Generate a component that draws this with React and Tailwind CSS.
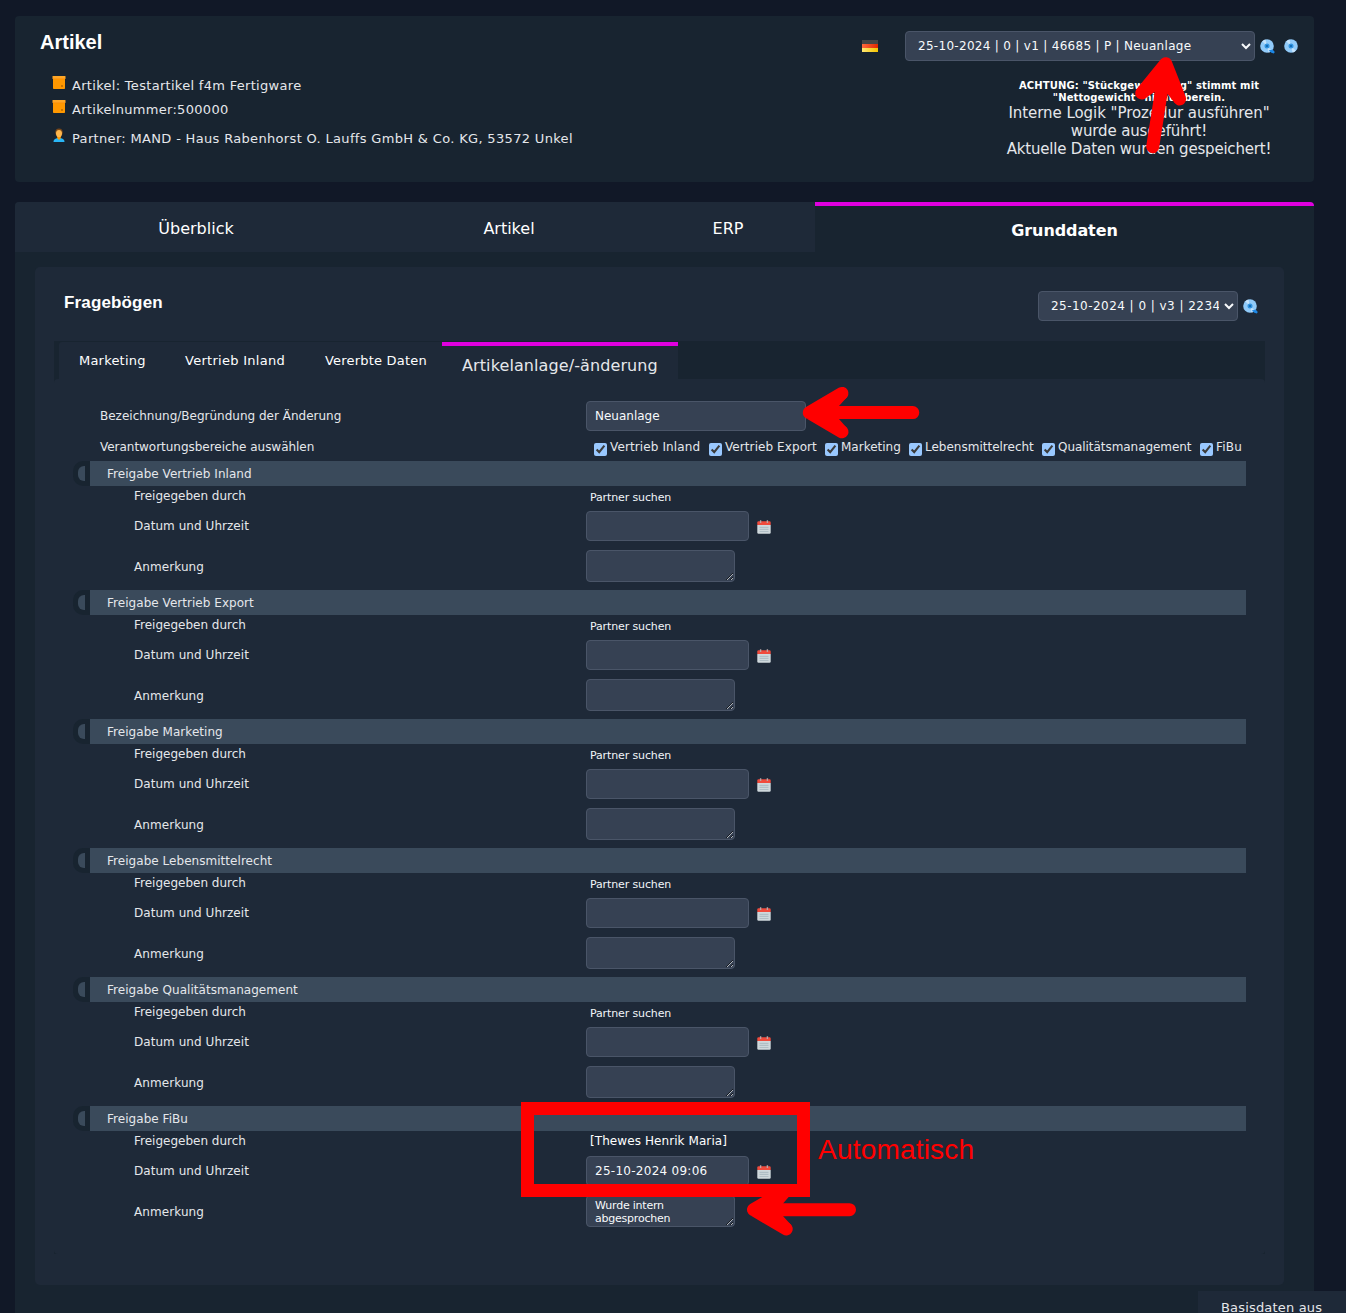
const sections = [
  { title: 'Freigabe Vertrieb Inland' },
  { title: 'Freigabe Vertrieb Export' },
  { title: 'Freigabe Marketing' },
  { title: 'Freigabe Lebensmittelrecht' },
  { title: 'Freigabe Qualitätsmanagement' },
  {
    title: 'Freigabe FiBu',
    partner: '[Thewes Henrik Maria]',
    date: '25-10-2024 09:06',
    note: 'Wurde intern\nabgesprochen',
  },
];

const areas = [
  { label: 'Vertrieb Inland', width: 'w-[115px] tracking-[0.12px]' },
  { label: 'Vertrieb Export', width: 'w-[116px] tracking-[0.08px]' },
  { label: 'Marketing', width: 'w-[84px]' },
  { label: 'Lebensmittelrecht', width: 'w-[133px]' },
  { label: 'Qualitätsmanagement', width: 'w-[158px] tracking-[-0.05px]' },
  { label: 'FiBu', width: 'w-[40px] tracking-[0.2px]' },
];

function BoxIcon() {
  return (
    <svg className="w-[14px] h-[13px] shrink-0" viewBox="0 0 14 13">
      <rect x="1" y="1" width="12" height="12" rx="0.8" fill="#ff9800" />
      <rect x="0.5" y="0" width="13" height="3" rx="0.6" fill="#ffa726" />
      <rect x="1" y="2.7" width="12" height="0.4" fill="#f57c00" />
      <rect x="9" y="9" width="2" height="2" fill="#c87400" />
    </svg>
  );
}

function PersonIcon() {
  return (
    <svg className="w-[14px] h-[14px] shrink-0" viewBox="0 0 14 14">
      <path d="M1.5 14 C1.5 11 4 10 7 10 C10 10 12.5 11 12.5 14 Z" fill="#29b6f6" />
      <path d="M5.2 8 H8.8 V10.2 L7 12 L5.2 10.2 Z" fill="#ff9800" />
      <ellipse cx="7" cy="4.3" rx="3.7" ry="3.8" fill="#784719" />
      <ellipse cx="7" cy="5.6" rx="3" ry="3.6" fill="#ffb74d" />
    </svg>
  );
}

function FlagIcon() {
  return (
    <svg className="w-[16px] h-[12px]" viewBox="0 0 16 12">
      <defs>
        <linearGradient id="flagRed" x1="0" y1="0" x2="1" y2="0">
          <stop offset="0" stopColor="#ff6a3c" />
          <stop offset="1" stopColor="#e02800" />
        </linearGradient>
        <linearGradient id="flagGold" x1="0" y1="0" x2="1" y2="0">
          <stop offset="0" stopColor="#ffe873" />
          <stop offset="1" stopColor="#f5c400" />
        </linearGradient>
      </defs>
      <rect width="16" height="4" fill="#454545" />
      <rect y="4" width="16" height="4" fill="url(#flagRed)" />
      <rect y="8" width="16" height="4" fill="url(#flagGold)" />
    </svg>
  );
}

function DiscIcon({ search }) {
  return (
    <svg className="w-[15px] h-[15px]" viewBox="0 0 15 15">
      <circle cx="7" cy="7" r="6.8" fill="#90caf9" />
      <path d="M7 7 L2.2 2.2 A6.8 6.8 0 0 1 5.5 0.4 Z M7 7 L11.8 11.8 A6.8 6.8 0 0 1 8.5 13.6 Z" fill="#c5e3fc" />
      <circle cx="7" cy="7" r="2.5" fill="#2f93e0" />
      <circle cx="7" cy="7" r="1" fill="#0d5fa8" />
      {search && <path d="M8.6 11.6 L12.6 10.4 L14.8 13 L13.8 14.6 L11.4 13.8 Z" fill="#1e88e5" />}
    </svg>
  );
}

function CalendarIcon() {
  return (
    <svg className="w-[14px] h-[14px]" viewBox="0 0 14 14">
      <path d="M0.3 5 H13.7 V12.5 Q13.7 13.7 12.5 13.7 H1.5 Q0.3 13.7 0.3 12.5 Z" fill="#cfd8dc" />
      <path d="M0.3 5 V2.6 Q0.3 1.3 1.6 1.3 H12.4 Q13.7 1.3 13.7 2.6 V5 Z" fill="#f04a3c" />
      <path d="M3.6 0.3 V3 M10.4 0.3 V3" stroke="#b9a5a5" strokeWidth="1.4" />
      <path d="M2.5 7.3 H11.5 M2.5 9.4 H11.5 M2.5 11.5 H11.5" stroke="#b0bec5" strokeWidth="1.2" />
    </svg>
  );
}

// points to the left, the tip is at 0,0
function Arrow({ x, y, length, angle = 0 }) {
  return (
    <g transform={`translate(${x} ${y}) rotate(${angle})`}>
      <path
        d={`M${length} 0 H0 M32.7 -19.2 L0 0 L32.7 19.2`}
        fill="none"
        stroke="#f00"
        strokeWidth="13"
        strokeLinecap="round"
        strokeLinejoin="round"
      />
      <path d="M0 0 L32 -19 L37.8 -15.6 L29.7 -6.5 V6.5 L37.8 15.6 L32 19 Z" fill="#f00" />
    </g>
  );
}

const field = 'block border border-[#4a5568] bg-[#364153] rounded-[4px] text-[#f8fafc] outline-none';

function Section({ title, partner, date, note }) {
  return (
    <section className="h-[129px]">
      <div className="flex h-[25px]">
        <div className="w-[17px] bg-[#182430] rounded-l-[10px] pl-[5px] py-[5px]">
          <div className="w-[7px] h-[15px] bg-[#3a4a5b] rounded-l-[6px]" />
        </div>
        <h3 className="w-[1156px] bg-[#3a4a5b] pl-[17px] leading-[26px] tracking-[0.04px]">{title}</h3>
      </div>
      <div className="flex h-[22px] pl-[61px]">
        <span className="w-[456px] leading-[21px]">Freigegeben durch</span>
        {partner ? (
          <span className="leading-[21px] tracking-[0.08px] text-white">{partner}</span>
        ) : (
          <span className="text-[11px] leading-[23px] tracking-[-0.13px] text-[#f1f5f9]">Partner suchen</span>
        )}
      </div>
      <div className="flex items-center h-[36px] pl-[61px]">
        <span className="w-[452px] leading-[18px] pb-[1px] tracking-[0.05px]">Datum und Uhrzeit</span>
        <input className={`${field} w-[163px] h-[30px] px-2 tracking-[0.27px]`} defaultValue={date} />
        <span className="ml-2 mt-[2px]"><CalendarIcon /></span>
      </div>
      <div className="flex h-[46px] pl-[61px] pt-[6px]">
        <span className="w-[452px] leading-[34px] tracking-[0.08px]">Anmerkung</span>
        <textarea
          className={`${field} w-[149px] h-[32px] px-2 pt-[3px] text-[11px] leading-[13px] tracking-[-0.22px] overflow-hidden resize`}
          defaultValue={note}
        />
      </div>
    </section>
  );
}

export default function App() {
  return (
    <div className="relative w-[1346px] h-[1313px] overflow-hidden bg-[#111827] pt-[16px] pl-[15px] scheme-dark font-['DejaVu_Sans',sans-serif] text-[12px] text-[#e5e7eb]">
      <header className="flex justify-between w-[1299px] h-[166px] bg-[#182430] rounded-[4px]">
        <div className="pl-[25px]">
          <h1 className="pt-[11px] text-[20px] leading-[30px] font-bold text-white font-['Liberation_Sans',Arial,sans-serif]">Artikel</h1>
          <div className="pl-[12px] pt-[16px] text-[13px] tracking-[0.3px]">
            <div className="flex gap-[6px] h-[24px] leading-[26px]"><span className="pt-[3px]"><BoxIcon /></span>Artikel: Testartikel f4m Fertigware</div>
            <div className="flex gap-[6px] h-[24px] leading-[26px]"><span className="pt-[3px]"><BoxIcon /></span>Artikelnummer:500000</div>
            <div className="flex gap-[6px] h-[24px] leading-[26px] mt-[5px] tracking-[0.33px]"><span className="pt-[2px]"><PersonIcon /></span>Partner: MAND - Haus Rabenhorst O. Lauffs GmbH &amp; Co. KG, 53572 Unkel</div>
          </div>
        </div>
        <div className="w-[452px] pt-[15px]">
          <div className="flex items-center">
            <FlagIcon />
            <select className={`${field} ml-[27px] w-[350px] h-[30px] pl-[8px] tracking-[0.3px]`}>
              <option>25-10-2024 | 0 | v1 | 46685 | P | Neuanlage</option>
            </select>
            <span className="ml-[5px]"><DiscIcon search /></span>
            <span className="ml-[9px]"><DiscIcon /></span>
          </div>
          <div className="ml-[127px] mt-[19px] w-[300px] text-center">
            <p className="text-[10px] leading-[12px] font-bold text-white tracking-[0.12px]">
              ACHTUNG: "Stückgewichtung" stimmt mit<br />"Nettogewicht" nicht überein.
            </p>
            <p className="text-[15px] leading-[18px]">
              <span className="tracking-[-0.05px]">Interne Logik "Prozedur ausführen"<br /></span>
              <span className="tracking-[-0.15px]">wurde ausgeführt!</span><br />
              <span className="tracking-[-0.2px]">Aktuelle Daten wurden gespeichert!</span>
            </p>
          </div>
        </div>
      </header>

      <main className="mt-[20px] w-[1299px] h-[1111px] bg-[#182430] rounded-t-[4px] overflow-hidden">
        <nav className="flex h-[50px] text-[16px] leading-[53px] text-center text-white">
          <div className="w-[362px] bg-[#1e2938]">Überblick</div>
          <div className="w-[264px] bg-[#1e2938]">Artikel</div>
          <div className="w-[174px] bg-[#1e2938]">ERP</div>
          <div className="w-[499px] border-t-4 border-[#df00df] leading-[50px] font-bold tracking-[-0.1px]">Grunddaten</div>
        </nav>

        <div className="ml-[20px] mt-[15px] w-[1249px] h-[1018px] bg-[#1e2938] rounded-[5px] pl-[19px]">
          <div className="flex h-[74px] pl-[10px] pt-[24px]">
            <h2 className="w-[974px] text-[17px] leading-[23px] font-bold text-white tracking-[0.15px] font-['Liberation_Sans',Arial,sans-serif]">Fragebögen</h2>
            <select className={`${field} w-[200px] h-[30px] pl-[8px] pr-[2px] tracking-[0.46px]`}>
              <option>25-10-2024 | 0 | v3 | 22342 | P | Neuanlage</option>
            </select>
            <span className="ml-[5px] pt-[8px]"><DiscIcon search /></span>
          </div>

          <div className="w-[1211px] h-[913px] bg-[#182430]">
            <nav className="flex h-[38px] pl-[5px] pt-[1px] text-[13px] leading-[37px] text-white tracking-[0.2px]">
              <div className="w-[106px] bg-[#1e2938] pl-[20px] rounded-tl-[3px]">Marketing</div>
              <div className="w-[140px] bg-[#1e2938] pl-[20px] tracking-[0.28px]">Vertrieb Inland</div>
              <div className="w-[137px] bg-[#1e2938] pl-[20px]">Vererbte Daten</div>
              <div className="w-[236px] bg-[#1e2938] border-t-4 border-[#df00df] pl-[20px] text-[16px] leading-[39px] tracking-[0.1px] text-[#e5e7eb]">Artikelanlage/-änderung</div>
            </nav>

            <div className="h-[875px] bg-[#1e2938] rounded-[4px] pl-[19px] pt-[22px]">
              <div className="flex pl-[27px] h-[36px]">
                <span className="w-[486px] leading-[30px]">Bezeichnung/Begründung der Änderung</span>
                <input className={`${field} w-[220px] h-[30px] px-2`} defaultValue="Neuanlage" />
              </div>
              <div className="flex pl-[27px] h-[24px]">
                <span className="w-[494px] leading-[21px] tracking-[-0.03px]">Verantwortungsbereiche auswählen</span>
                {areas.map(({ label, width }) => (
                  <label key={label} className={`${width} flex shrink-0 gap-[3px] leading-[20px] whitespace-nowrap`}>
                    <input type="checkbox" defaultChecked className="w-[13px] h-[13px] mt-[6px]" />
                    {label}
                  </label>
                ))}
              </div>
              {sections.map((s) => (
                <Section key={s.title} {...s} />
              ))}
            </div>
          </div>
        </div>
      </main>

      <div className="absolute left-[1198px] top-[1291px] w-[148px] h-[22px] bg-[#1e2938] pl-[23px] pt-[8px] text-[13px] leading-[17px] tracking-[0.18px]">
        Basisdaten aus
      </div>

      {/* hand-drawn notes over the form */}
      <div className="absolute left-[521px] top-[1102px] w-[289px] h-[95px] border-[13px] border-[#f00]" />
      <div className="absolute left-[818px] top-[1134px] text-[28px] leading-[32px] tracking-[0.2px] text-[#f00] font-['Liberation_Sans',Arial,sans-serif]">Automatisch</div>
      <svg className="absolute left-0 top-0 w-[1346px] h-[1313px] pointer-events-none" viewBox="0 0 1346 1313">
        <Arrow x={1165.7} y={63.7} length={84} angle={98.9} />
        <Arrow x={809.3} y={412.6} length={103.5} />
        <Arrow x={753.5} y={1209.7} length={96} />
      </svg>
    </div>
  );
}
